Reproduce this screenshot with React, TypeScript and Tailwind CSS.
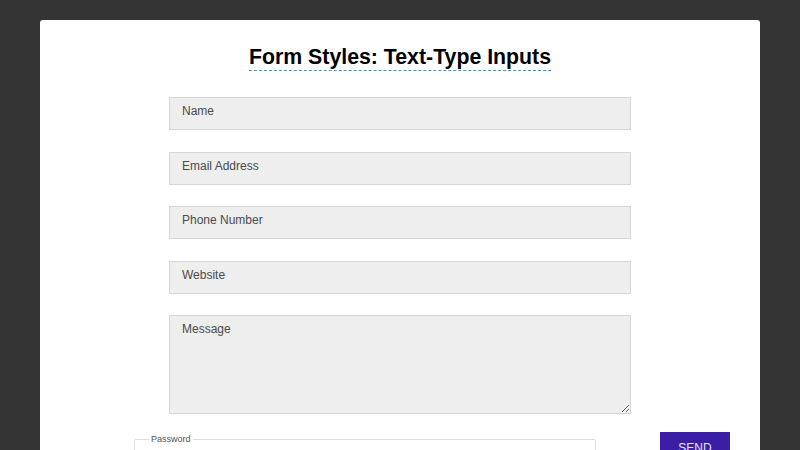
import React from "react";

const fields = ["Name", "Email Address", "Phone Number", "Website"];

export default function App() {
  return (
    <div className="h-[450px] overflow-hidden bg-[#333] px-10 pt-5 font-['Liberation_Sans',Arial,sans-serif]">
      <div className="h-[460px] rounded-t-[3px] bg-white pt-[24px]">
        <div className="text-center">
          <h1 className="inline-block border-b border-dashed border-[#2d9cc6] text-[21.3px] font-bold leading-[26px] text-black">
            Form Styles: Text-Type Inputs
          </h1>
        </div>

        <form className="mt-[26px] flex flex-col items-center gap-[21.5px]">
          {fields.map((f) => (
            <input
              key={f}
              type="text"
              placeholder={f}
              className="box-border h-[33px] w-[462px] border border-[#d6d6d6] bg-[#eee] pb-[11px] pl-3 pt-[6px] text-[12px] leading-[14px] text-[#333] outline-none placeholder:text-[#4a4a4a]"
            />
          ))}
          <textarea
            placeholder="Message"
            className="box-border h-[99px] w-[462px] border border-[#d6d6d6] bg-[#eee] pl-3 pt-[6px] text-[12px] leading-[14px] text-[#333] outline-none placeholder:text-[#4a4a4a]"
          />
        </form>

        <div className="mt-[18px] flex items-start pl-[94px]">
          <fieldset className="mt-[2px] box-border h-[40px] w-[462px] rounded-[2px] border border-[#ddd] px-[14px]">
            <legend className="px-[2px] text-[9px] leading-[10px] text-[#555]">Password</legend>
          </fieldset>
          <button
            type="button"
            className="ml-[64px] w-[70px] bg-[#3a1fa6] pb-[12px] pt-[9px] text-[12px] leading-[14px] text-[#e6e3f5]"
          >
            SEND
          </button>
        </div>
      </div>
    </div>
  );
}
